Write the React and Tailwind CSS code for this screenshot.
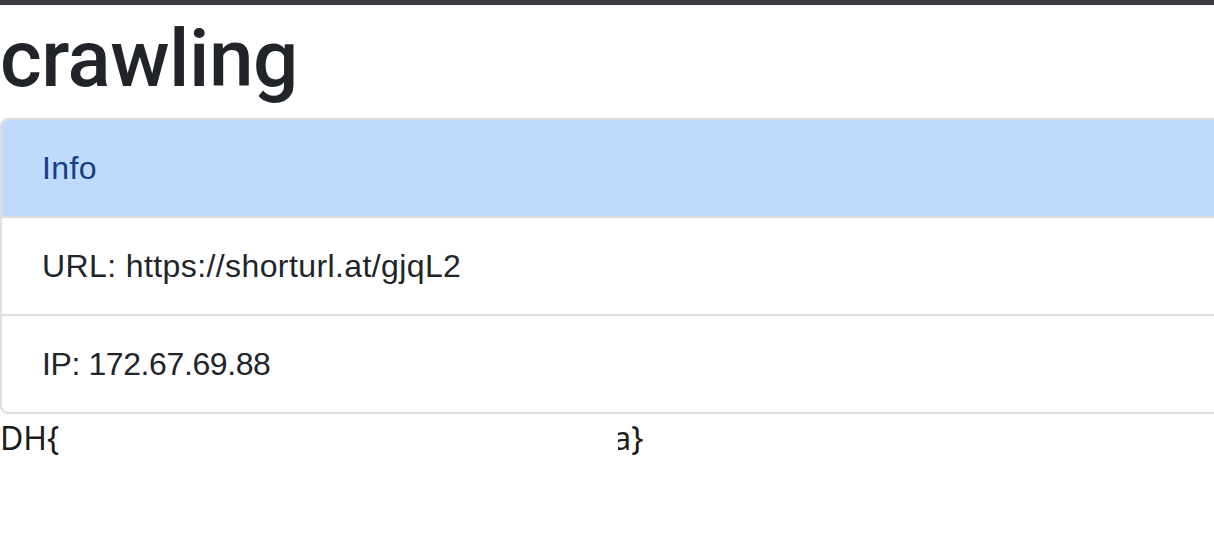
export default function App() {
    const rows = [
        { text: "URL: https://shorturl.at/gjqL2", track: "tracking-[0.4px]" },
        { text: "IP: 172.67.69.88", track: "tracking-[-0.4px]" },
    ];

    return (
        <div className="w-[1214px] h-[550px] overflow-hidden bg-white">
            <div className="h-[5px] bg-[#3b3b3f]" />
            <h1 className="mt-[6px] mb-[11px] text-[80px] leading-[96px] font-medium tracking-[-0.5px] text-[#212529] font-['Roboto',Arial,sans-serif]">
                crawling
            </h1>
            <div className="mr-[-12px] border-2 border-[#dedede] rounded-lg overflow-hidden font-['Liberation_Sans',Arial,sans-serif] text-[32px] leading-[48px]">
                <div className="bg-[#bfdafc] text-[#163f85] px-10 py-6 border-t-2 border-[#a6c2e6] -mt-[2px] tracking-[0.4px]">
                    Info
                </div>
                {rows.map((row) => (
                    <div
                        key={row.text}
                        className={"border-t-2 border-[#dedede] px-10 py-6 text-[#212529] " + row.track}
                    >
                        {row.text}
                    </div>
                ))}
            </div>
            <div className="flex items-center text-[32px] leading-[48px] text-[#1b1b1b] font-['Noto_Sans',sans-serif]">
                <span>DH{"{"}</span>
                <span className="w-[559px]" />
                <span className="inline-block overflow-hidden w-[34px]">
                    <span className="inline-block -ml-[5px]">a{"}"}</span>
                </span>
            </div>
        </div>
    );
}
